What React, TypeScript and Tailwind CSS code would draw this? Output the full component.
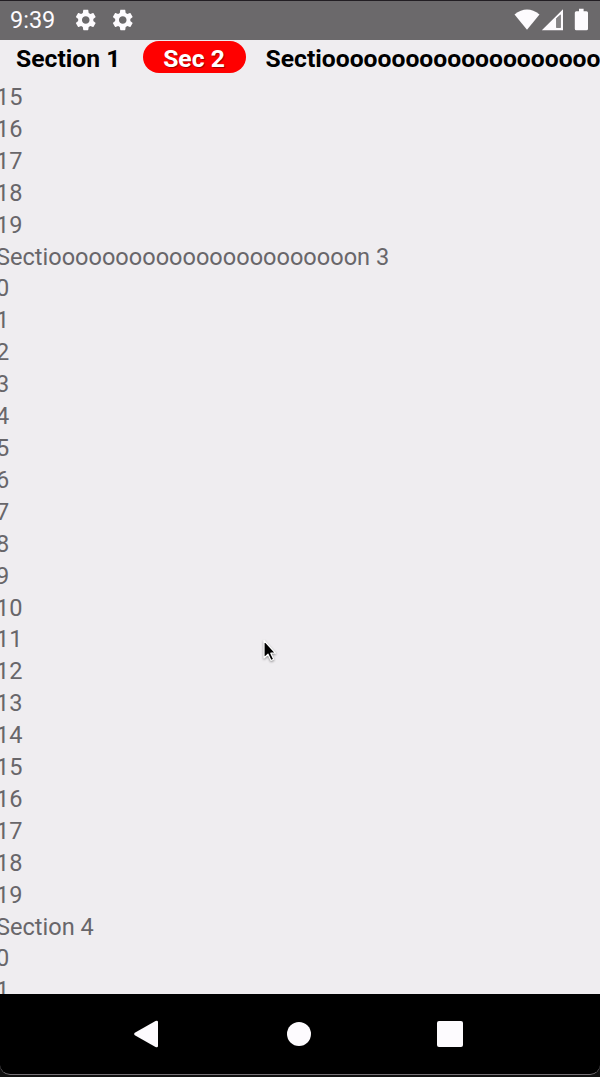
const tabs = ["Section 1", "Sec 2", "Sectiooooooooooooooooooooooon 3"];

const numbers = (from: number, to: number) =>
  Array.from({ length: to - from + 1 }, (_, i) => String(from + i));

const rows = [
  ...numbers(15, 19),
  "Sectiooooooooooooooooooooooon 3",
  ...numbers(0, 19),
  "Section 4",
  ...numbers(0, 1),
];

const gearPath =
  "M19.14 12.94c.04-.3.06-.61.06-.94 0-.32-.02-.64-.07-.94l2.03-1.58c.18-.14.23-.41.12-.61l-1.92-3.32c-.12-.22-.37-.29-.59-.22l-2.39.96c-.5-.38-1.03-.7-1.62-.94l-.36-2.54c-.04-.24-.24-.41-.48-.41h-3.84c-.24 0-.43.17-.47.41l-.36 2.54c-.59.24-1.13.57-1.62.94l-2.39-.96c-.22-.08-.47 0-.59.22L2.74 8.87c-.12.21-.08.47.12.61l2.03 1.58c-.05.3-.09.63-.09.94s.02.64.07.94l-2.03 1.58c-.18.14-.23.41-.12.61l1.92 3.32c.12.22.37.29.59.22l2.39-.96c.5.38 1.03.7 1.62.94l.36 2.54c.05.24.24.41.48.41h3.84c.24 0 .44-.17.47-.41l.36-2.54c.59-.24 1.13-.56 1.62-.94l2.39.96c.22.08.47 0 .59-.22l1.92-3.32c.12-.22.07-.47-.12-.61l-2.01-1.58zM12 15.6c-1.98 0-3.6-1.62-3.6-3.6s1.62-3.6 3.6-3.6 3.6 1.62 3.6 3.6-1.62 3.6-3.6 3.6z";

function Gear() {
  return (
    <svg viewBox="1.9 1.6 20.2 20.8" className="h-[22px] w-[21.5px] fill-[#fdfbfe]">
      <path d={gearPath} />
    </svg>
  );
}

function StatusBar() {
  return (
    <header className="flex h-10 shrink-0 items-center border-t border-[#221e23] bg-[#6b696b] pb-px pl-[10px] text-[#fdfbfe]">
      <span className="w-[65px] text-[23.5px] leading-[39px]">9:39</span>
      <div className="flex gap-[15.5px]">
        <Gear />
        <Gear />
      </div>
      <svg viewBox="0 0 76 24" className="ml-auto mr-[10px] h-6 w-[76px] fill-[#fdfbfe]">
        <path d="M0.5 6.5Q13 -3.5 25.5 6.5L13 21.8Z" />
        <path
          fillRule="evenodd"
          d="M27.8 22.3L49 1.3V22.3ZM42.3 10.6V19.8H46.7V6.6Z"
        />
        <path d="M42.3 10.6L46.7 6.6V19.8H42.3Z" className="fill-[#858385]" />
        <path d="M65 .8h4.6v2.4h2.9q1.5 0 1.5 1.5v16q0 1.6-1.5 1.6h-10.2q-1.5 0-1.5-1.6v-16q0-1.5 1.5-1.5H65Z" />
      </svg>
    </header>
  );
}

function Tabs({ active }: { active: number }) {
  return (
    <nav className="flex h-[42px] shrink-0 items-start overflow-hidden pt-[0.5px] text-[24.7px] font-bold text-black">
      {tabs.map((tab, i) => (
        <button
          key={tab}
          className={
            i === active
              ? "mr-[1px] ml-[1.5px] h-[32.5px] w-[103px] shrink-0 rounded-full bg-[#ff0000] text-center leading-[36px] whitespace-nowrap text-white [text-shadow:1px_1px_1px_#0006]"
              : i === 0
                ? "h-8 w-[141px] shrink-0 pl-4 text-left leading-[36px] whitespace-nowrap"
                : "h-8 shrink-0 pl-[19px] leading-[36px] whitespace-nowrap"
          }
        >
          {tab}
        </button>
      ))}
    </nav>
  );
}

function Pointer() {
  return (
    <svg
      viewBox="0 0 18 26"
      className="absolute left-[261px] top-[638px] h-[26px] w-[18px] drop-shadow-[0_1px_1px_#0006]"
    >
      <path
        d="M3 2.5V20L7 16.2L10 22.5L12.7 21.2L9.8 15.2H14.5Z"
        fill="black"
        stroke="white"
        strokeWidth="1.2"
        strokeLinejoin="round"
      />
    </svg>
  );
}

function NavigationBar() {
  return (
    <footer className="h-[83px] shrink-0 bg-[#111]">
      <div className="flex h-[81px] items-center rounded-b-[10px] border-b border-[#777277] bg-black pl-[133px]">
        <svg viewBox="0 0 26 28" className="h-7 w-[26px] fill-[#fdfbfe]">
          <path d="M1.8 12.7L22.5.9Q25 .2 25 2V26Q25 27.9 22.5 27L1.8 15.3Q.2 14 1.8 12.7Z" />
        </svg>
        <span className="ml-[127.5px] size-[24.5px] rounded-full bg-[#fdfbfe]" />
        <span className="ml-[126px] size-[25.5px] rounded-[2px] bg-[#fdfbfe]" />
      </div>
    </footer>
  );
}

export default function App() {
  return (
    <div className="relative flex h-[1077px] w-[600px] flex-col overflow-hidden bg-[#efedf0] font-['Roboto',sans-serif]">
      <StatusBar />
      <Tabs active={1} />
      <main className="min-h-0 flex-1 overflow-hidden">
        <ul className="-ml-[4px] text-[23.55px] leading-[31.92px] text-[#68666a]">
          {rows.map((row, i) => (
            <li key={i} className="h-[31.92px] whitespace-nowrap">
              {row}
            </li>
          ))}
        </ul>
      </main>
      <NavigationBar />
      <Pointer />
    </div>
  );
}
